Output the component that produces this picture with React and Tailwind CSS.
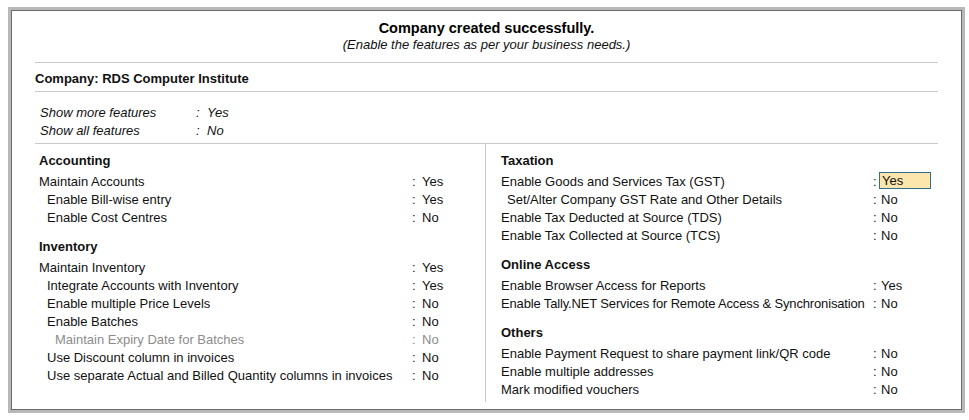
import React from "react";

const accounting = [
  { label: "Maintain Accounts", value: "Yes", indent: 0 },
  { label: "Enable Bill-wise entry", value: "Yes", indent: 1 },
  { label: "Enable Cost Centres", value: "No", indent: 1 },
];

const inventory = [
  { label: "Maintain Inventory", value: "Yes", indent: 0 },
  { label: "Integrate Accounts with Inventory", value: "Yes", indent: 1 },
  { label: "Enable multiple Price Levels", value: "No", indent: 1 },
  { label: "Enable Batches", value: "No", indent: 1 },
  { label: "Maintain Expiry Date for Batches", value: "No", indent: 2, dim: true },
  { label: "Use Discount column in invoices", value: "No", indent: 1 },
  { label: "Use separate Actual and Billed Quantity columns in invoices", value: "No", indent: 1 },
];

const taxation = [
  { label: "Enable Goods and Services Tax (GST)", value: "Yes", indent: 0, active: true },
  { label: "Set/Alter Company GST Rate and Other Details", value: "No", indent: 1 },
  { label: "Enable Tax Deducted at Source (TDS)", value: "No", indent: 0 },
  { label: "Enable Tax Collected at Source (TCS)", value: "No", indent: 0 },
];

const online = [
  { label: "Enable Browser Access for Reports", value: "Yes", indent: 0 },
  { label: "Enable Tally.NET Services for Remote Access & Synchronisation", value: "No", indent: 0, tight: true },
];

const others = [
  { label: "Enable Payment Request to share payment link/QR code", value: "No", indent: 0 },
  { label: "Enable multiple addresses", value: "No", indent: 0 },
  { label: "Mark modified vouchers", value: "No", indent: 0 },
];

const Row = ({ row, side }) => {
  const indent =
    side === "left"
      ? ["pl-0", "pl-[8px]", "pl-[16px]"][row.indent]
      : ["pl-0", "pl-[6px]", "pl-[12px]"][row.indent];
  const labelW = side === "left" ? "w-[373px]" : "w-[372px]";
  const colonW = side === "left" ? "w-[10px]" : "w-[8px]";
  return (
    <div className={`flex h-[18px] leading-[18px] whitespace-nowrap ${row.dim ? "text-[#8c8c8c]" : ""}`}>
      <div className={`${labelW} ${indent} shrink-0 ${row.tight ? "tracking-[-0.15px]" : ""}`}>{row.label}</div>
      <div className={`${colonW} shrink-0`}>:</div>
      {row.active ? (
        <div className="-ml-[2px] -mt-[1px] h-[17px] w-[52px] border border-[#2f6e8c] bg-[#fde6ab] pl-[2px] leading-[15px]">
          {row.value}
        </div>
      ) : (
        <div>{row.value}</div>
      )}
    </div>
  );
};

const Section = ({ title, rows, side, first }) => (
  <div className={first ? "" : "mt-[11px]"}>
    <div className="mb-[3px] h-[18px] font-bold leading-[18px]">{title}</div>
    {rows.map((r) => (
      <Row key={r.label} row={r} side={side} />
    ))}
  </div>
);

const App = () => {
  return (
    <div
      className="h-[420px] w-[969px] bg-white pl-[8px] pt-[7px] text-[13px] text-[#111]"
      style={{ fontFamily: '"Liberation Sans", Arial, sans-serif' }}
    >
      <div className="h-[406px] w-[957px] border-[3px] border-[#b8b8b8]">
        <div className="h-full border border-[#6b6b6b] px-[23px]">
          <div className="pt-[8px] text-center">
            <div className="h-[18px] text-[14.5px] font-bold leading-[18px] text-black">
              Company created successfully.
            </div>
            <div className="h-[16px] text-[13px] italic leading-[16px]">
              (Enable the features as per your business needs.)
            </div>
          </div>

          <div className="mt-[9px] border-t border-[#c9c9c9] pt-[8px] pb-[4px]">
            <div className="h-[16px] font-bold leading-[16px]">Company: RDS Computer Institute</div>
          </div>

          <div className="border-t border-[#c9c9c9] pt-[12px] pb-[3px] pl-[5px] italic">
            <div className="flex h-[18px] leading-[18px]">
              <div className="w-[156px]">Show more features</div>
              <div className="w-[11px]">:</div>
              <div>Yes</div>
            </div>
            <div className="flex h-[18px] leading-[18px]">
              <div className="w-[156px]">Show all features</div>
              <div className="w-[11px]">:</div>
              <div>No</div>
            </div>
          </div>

          <div className="flex border-t border-[#c9c9c9]">
            <div className="w-[451px] border-r border-[#c9c9c9] pt-[8px] pl-[4px]">
              <Section title="Accounting" rows={accounting} side="left" first />
              <Section title="Inventory" rows={inventory} side="left" />
            </div>
            <div className="flex-1 pt-[8px] pl-[15px] pb-[3px]">
              <Section title="Taxation" rows={taxation} side="right" first />
              <Section title="Online Access" rows={online} side="right" />
              <Section title="Others" rows={others} side="right" />
            </div>
          </div>
        </div>
      </div>
    </div>
  );
};

export default App;
